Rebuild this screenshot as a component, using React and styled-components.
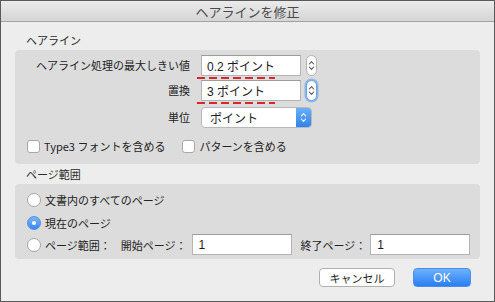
import React from 'react';
import styled, { createGlobalStyle, css } from 'styled-components';

const GlobalStyle = createGlobalStyle`
	html, body {
		margin: 0;
		padding: 0;
		background: #ffffff;
	}
	body {
		font-family: "Noto Sans CJK JP", "Liberation Sans", sans-serif;
		font-size: 11px;
		color: #232323;
	}
`;

const Window = styled.div`
	width: 493px;
	height: 300px;
	border: 1px solid #5a5a5a;
	background: #ededed;
	display: flex;
	flex-direction: column;
`;

const TitleBar = styled.div`
	height: 20px;
	flex: none;
	background: linear-gradient(#ebebeb, #d5d5d5);
	border-bottom: 1px solid #a2a2a2;
	display: flex;
	align-items: center;
	justify-content: center;
	font-size: 13px;
	color: #4a4a4a;
	line-height: 1;
`;

const Body = styled.div`
	padding: 9px 14px 0 14px;
	display: flex;
	flex-direction: column;
`;

const SectionLabel = styled.div`
	padding-left: 11px;
	height: 19px;
	line-height: 19px;
	font-size: 11px;
	color: #2a2a2a;
`;

const Group = styled.div`
	background: #dcdcdc;
	border-radius: 4px;
	padding: ${(p) => p.$pad};
	margin-bottom: ${(p) => p.$mb || 0}px;
	display: flex;
	flex-direction: column;
`;

const FormGrid = styled.div`
	display: grid;
	grid-template-columns: 175px auto;
	column-gap: 11px;
	align-items: center;
`;

const FieldLabel = styled.div`
	text-align: right;
	line-height: 21px;
	margin-top: ${(p) => p.$mt || 0}px;
`;

const FieldCell = styled.div`
	display: flex;
	align-items: center;
	gap: 5px;
	position: relative;
	margin-top: ${(p) => p.$mt || 0}px;
`;

const TextBox = styled.div`
	width: ${(p) => p.$w}px;
	height: 21px;
	box-sizing: border-box;
	background: #fff;
	border: 1px solid #b4b4b4;
	border-top-color: #9c9c9c;
	padding-left: ${(p) => p.$pl || 5}px;
	display: flex;
	align-items: center;
	font-size: 12px;
	color: #1a1a1a;
	font-family: "Liberation Sans", "Noto Sans CJK JP", sans-serif;
`;

const Annotation = styled.div`
	position: absolute;
	left: -4px;
	top: 22px;
	width: 78px;
	height: 2px;
	background: repeating-linear-gradient(90deg, #d8262a 0 8px, transparent 8px 12px);
`;

const StepperBox = styled.div`
	width: 11px;
	height: 21px;
	box-sizing: border-box;
	background: #fff;
	border: 1px solid #b1b1b1;
	border-radius: 6px;
	display: flex;
	align-items: center;
	justify-content: center;
	${(p) =>
		p.$focus &&
		css`
			border-color: #6e9fd8;
			box-shadow: 0 0 0 1.5px #8ab7ec;
		`}
`;

const Popup = styled.div`
	width: 111px;
	height: 21px;
	box-sizing: border-box;
	background: #fff;
	border: 1px solid #b8b8b8;
	border-radius: 4px;
	display: flex;
	align-items: stretch;
	overflow: hidden;
`;

const PopupText = styled.div`
	flex: 1;
	padding-left: 8px;
	display: flex;
	align-items: center;
	font-size: 12px;
`;

const PopupArrows = styled.div`
	width: 15px;
	background: linear-gradient(#6ab0f8, #2f83ee);
	display: flex;
	align-items: center;
	justify-content: center;
`;

const CheckRow = styled.div`
	display: flex;
	align-items: center;
	margin-top: 10px;
	padding-left: 12px;
	height: 16px;
`;

const CheckItem = styled.label`
	display: flex;
	align-items: center;
	gap: 4px;
	margin-right: ${(p) => p.$mr || 0}px;
`;

const CheckBox = styled.span`
	width: 13px;
	height: 13px;
	box-sizing: border-box;
	background: #fff;
	border: 1px solid #a8a8a8;
	border-radius: 3px;
	display: inline-block;
`;

const RadioRow = styled.div`
	display: flex;
	align-items: center;
	padding-left: 12px;
	height: 21px;
	margin-top: ${(p) => p.$mt || 0}px;
`;

const Radio = styled.span`
	width: 14px;
	height: 14px;
	box-sizing: border-box;
	border-radius: 50%;
	background: #fff;
	border: 1px solid #a5a5a5;
	margin-right: 4px;
	display: flex;
	align-items: center;
	justify-content: center;
	${(p) =>
		p.$on &&
		css`
			background: linear-gradient(#7cb6fb, #3a88f5);
			border-color: #4f8ee6;
			&::after {
				content: '';
				width: 4px;
				height: 4px;
				border-radius: 50%;
				background: #fff;
			}
		`}
`;

const InlineLabel = styled.span`
	margin: ${(p) => p.$m};
`;

const Footer = styled.div`
	display: flex;
	justify-content: flex-end;
	gap: 18px;
	padding: 9px 9px 0 0;
`;

const Button = styled.div`
	width: ${(p) => p.$w}px;
	height: 19px;
	box-sizing: border-box;
	border-radius: 4px;
	display: flex;
	align-items: center;
	justify-content: center;
	font-size: 11px;
	${(p) =>
		p.$primary
			? css`
					background: linear-gradient(#6db2fb, #2a7ef4);
					border: 1px solid #4d8fe8;
					color: #fff;
					font-family: "Liberation Sans", sans-serif;
					font-size: 12px;
			  `
			: css`
					background: #fff;
					border: 1px solid #b0b0b0;
					color: #1f1f1f;
			  `}
`;

const Chevrons = ({ color = '#555', w = 7, h = 13 }) => (
	<svg width={w} height={h} viewBox="0 0 7 13">
		<path d="M1.3 5 L3.5 2.6 L5.7 5" fill="none" stroke={color} strokeWidth="1.1" strokeLinecap="round" strokeLinejoin="round" />
		<path d="M1.3 8 L3.5 10.4 L5.7 8" fill="none" stroke={color} strokeWidth="1.1" strokeLinecap="round" strokeLinejoin="round" />
	</svg>
);

const App = () => {
	return (
		<>
			<GlobalStyle />
			<Window>
				<TitleBar>ヘアラインを修正</TitleBar>
				<Body>
					<SectionLabel>ヘアライン</SectionLabel>
					<Group $pad="5px 0 10px 0" $mb={1}>
						<FormGrid>
							<FieldLabel>ヘアライン処理の最大しきい値</FieldLabel>
							<FieldCell>
								<TextBox $w={100}>0.2 ポイント</TextBox>
								<StepperBox>
									<Chevrons />
								</StepperBox>
								<Annotation />
							</FieldCell>
							<FieldLabel $mt={4}>置換</FieldLabel>
							<FieldCell $mt={4}>
								<TextBox $w={100}>3 ポイント</TextBox>
								<StepperBox $focus>
									<Chevrons />
								</StepperBox>
								<Annotation />
							</FieldCell>
							<FieldLabel $mt={6}>単位</FieldLabel>
							<FieldCell $mt={6}>
								<Popup>
									<PopupText>ポイント</PopupText>
									<PopupArrows>
										<Chevrons color="#fff" />
									</PopupArrows>
								</Popup>
							</FieldCell>
						</FormGrid>
						<CheckRow>
							<CheckItem $mr={17}>
								<CheckBox />
								<span>Type3 フォントを含める</span>
							</CheckItem>
							<CheckItem>
								<CheckBox />
								<span>パターンを含める</span>
							</CheckItem>
						</CheckRow>
					</Group>
					<SectionLabel>ページ範囲</SectionLabel>
					<Group $pad="5px 0 4px 0">
						<RadioRow>
							<Radio />
							<span>文書内のすべてのページ</span>
						</RadioRow>
						<RadioRow $mt={2}>
							<Radio $on />
							<span>現在のページ</span>
						</RadioRow>
						<RadioRow $mt={1}>
							<Radio />
							<InlineLabel $m="0 10px 0 0">ページ範囲：</InlineLabel>
							<InlineLabel $m="0 5px 0 0">開始ページ：</InlineLabel>
							<TextBox $w={100} $pl={6}>1</TextBox>
							<InlineLabel $m="0 4px 0 9px">終了ページ：</InlineLabel>
							<TextBox $w={100} $pl={6}>1</TextBox>
						</RadioRow>
					</Group>
					<Footer>
						<Button $w={76}>キャンセル</Button>
						<Button $w={58} $primary>OK</Button>
					</Footer>
				</Body>
			</Window>
		</>
	);
};

export default App;
